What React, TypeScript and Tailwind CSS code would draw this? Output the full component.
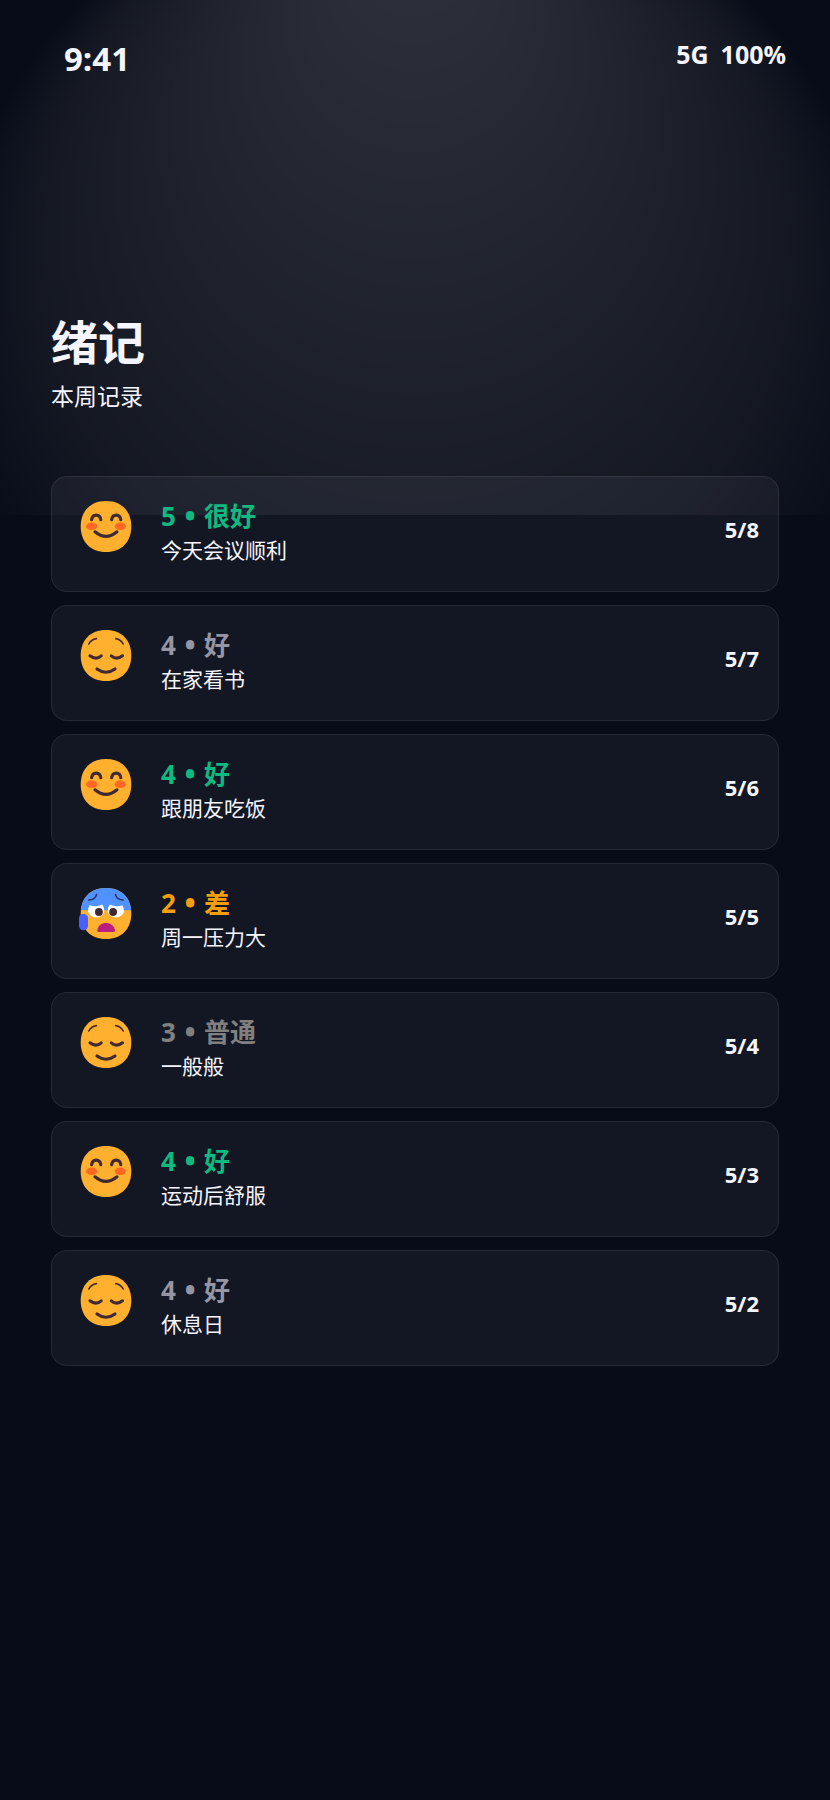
type Face = "smile" | "relieved" | "anxious";

type MoodEntry = {
  date: string;
  score: number;
  label: string;
  note: string;
  face: Face;
  color: string;
};

const entries: MoodEntry[] = [
  { date: "5/8", score: 5, label: "很好", note: "今天会议顺利", face: "smile", color: "text-[#10b981]" },
  { date: "5/7", score: 4, label: "好", note: "在家看书", face: "relieved", color: "text-[#9595a3]" },
  { date: "5/6", score: 4, label: "好", note: "跟朋友吃饭", face: "smile", color: "text-[#10b981]" },
  { date: "5/5", score: 2, label: "差", note: "周一压力大", face: "anxious", color: "text-[#f59e0b]" },
  { date: "5/4", score: 3, label: "普通", note: "一般般", face: "relieved", color: "text-[#808080]" },
  { date: "5/3", score: 4, label: "好", note: "运动后舒服", face: "smile", color: "text-[#10b981]" },
  { date: "5/2", score: 4, label: "好", note: "休息日", face: "relieved", color: "text-[#9595a3]" },
];

const HEAD =
  "M36 11 C51.5 11 61.3 21 61.3 36.5 C61.3 52 51.5 62 36 62 C20.5 62 10.7 52 10.7 36.5 C10.7 21 20.5 11 36 11 Z";

function SmileFace() {
  return (
    <>
      <path d={HEAD} fill="#ffb02e" />
      <ellipse cx="21.7" cy="36.3" rx="5.6" ry="3.7" fill="#ff6723" />
      <ellipse cx="50.3" cy="36.3" rx="5.6" ry="3.7" fill="#ff6723" />
      <g fill="none" stroke="#402a32" strokeWidth="3.1" strokeLinecap="round">
        <path d="M21.6 29.8 C22.4 23.5 30 23.5 30.8 29.8" />
        <path d="M41.6 29.8 C42.4 23.5 50 23.5 50.8 29.8" />
        <path d="M25 41.8 Q36 51 47 41.8" />
      </g>
    </>
  );
}

function RelievedFace() {
  return (
    <>
      <path d={HEAD} fill="#ffb02e" />
      <g fill="none" stroke="#402a32" strokeLinecap="round">
        <path d="M18.8 25 Q21 20.5 26.4 19.6" strokeWidth="1.6" />
        <path d="M45.8 19.6 Q51 20.5 53.2 25" strokeWidth="1.6" />
        <path d="M20 36.8 Q26 41.4 31.2 36.8" strokeWidth="3.1" />
        <path d="M41.3 36.8 Q46.5 41.4 52.5 36.8" strokeWidth="3.1" />
        <path d="M27 50 Q36 56.5 45 50" strokeWidth="3.1" />
      </g>
    </>
  );
}

function AnxiousFace() {
  return (
    <>
      <path d={HEAD} fill="#ffb02e" />
      <path d="M10.9 33.2 C12 19.5 21.5 11 36 11 C50.5 11 60 19.5 61.1 33.2 Z" fill="#5092ff" />
      <path
        d="M19.6 28.3 Q26.5 30.3 32.3 27.6 Q34.3 30.5 34.3 34.2 A8.3 7.9 0 0 1 18 34.2 Q18 31 19.6 28.3 Z"
        fill="#ffffff"
      />
      <path
        d="M52.4 28.3 Q45.5 30.3 39.7 27.6 Q37.7 30.5 37.7 34.2 A8.3 7.9 0 0 0 54 34.2 Q54 31 52.4 28.3 Z"
        fill="#ffffff"
      />
      <circle cx="28.9" cy="35" r="3.9" fill="#402a32" />
      <circle cx="43.1" cy="35" r="3.9" fill="#402a32" />
      <g fill="none" stroke="#2b3058" strokeWidth="1.6" strokeLinecap="round">
        <path d="M18.8 23 Q25 23 26.5 17.6" />
        <path d="M45.5 17.6 Q47 23 53.2 23" />
      </g>
      <path d="M27.3 53.5 C28 43.5 44 43.5 44.9 53.5 Q44.9 55 43.5 55 H28.7 Q27.3 55 27.3 53.5 Z" fill="#bb1d80" />
      <rect x="9" y="37" width="9" height="16.2" rx="4.2" fill="#4660fc" />
    </>
  );
}

function FaceIcon({ face }: { face: Face }) {
  return (
    <svg viewBox="0 0 72 72" className="size-18 shrink-0" aria-hidden="true">
      {face === "smile" && <SmileFace />}
      {face === "relieved" && <RelievedFace />}
      {face === "anxious" && <AnxiousFace />}
    </svg>
  );
}

function Glow() {
  return (
    <svg
      className="absolute inset-x-0 top-0 h-[515px] w-full"
      viewBox="0 0 830 515"
      preserveAspectRatio="none"
      aria-hidden="true"
    >
      <defs>
        <radialGradient id="glow" gradientUnits="userSpaceOnUse" cx="415" cy="330" r="470" fx="415" fy="-100">
          <stop offset="0" stopColor="#ffffff" stopOpacity="0.16" />
          <stop offset="0.8" stopColor="#ffffff" stopOpacity="0.05" />
          <stop offset="1" stopColor="#ffffff" stopOpacity="0" />
        </radialGradient>
      </defs>
      <rect width="830" height="515" fill="url(#glow)" />
    </svg>
  );
}

function EntryCard({ entry }: { entry: MoodEntry }) {
  return (
    <li className="flex h-[116px] items-center rounded-2xl border border-white/8 bg-[#f5f0ff]/5 pr-[19px] pl-[18px]">
      <div className="self-start pt-[13px]">
        <FaceIcon face={entry.face} />
      </div>
      <div className="ml-[19px] flex-1 pb-1">
        <h2 className={`flex gap-[9px] text-[26px] leading-9 font-bold ${entry.color}`}>
          <span>{entry.score}</span>
          <span className="font-extrabold">•</span>
          <span>{entry.label}</span>
        </h2>
        <p className="text-[21px] leading-8">{entry.note}</p>
      </div>
      <time className="pb-2.5 text-[22px] leading-8 font-bold">{entry.date}</time>
    </li>
  );
}

export default function App() {
  return (
    <div className="relative min-h-screen bg-[#080c18] font-['Open_Sans','Noto_Sans_CJK_SC',sans-serif] text-[#f5f5ff]">
      <Glow />
      <div className="relative">
        <header className="flex items-start justify-between pt-9 pr-11 pl-16 font-bold">
          <span className="text-[33px] leading-[46px]">9:41</span>
          <div className="flex gap-3 text-[25px] leading-9">
            <span>5G</span>
            <span>100%</span>
          </div>
        </header>
        <main className="px-[51px] pt-[228px]">
          <h1 className="text-[47px] leading-16 font-bold">绪记</h1>
          <p className="mt-1 text-[23px] leading-9">本周记录</p>
          <ul className="mt-[62px] flex flex-col gap-[13px]">
            {entries.map((entry) => (
              <EntryCard key={entry.date} entry={entry} />
            ))}
          </ul>
        </main>
      </div>
    </div>
  );
}
